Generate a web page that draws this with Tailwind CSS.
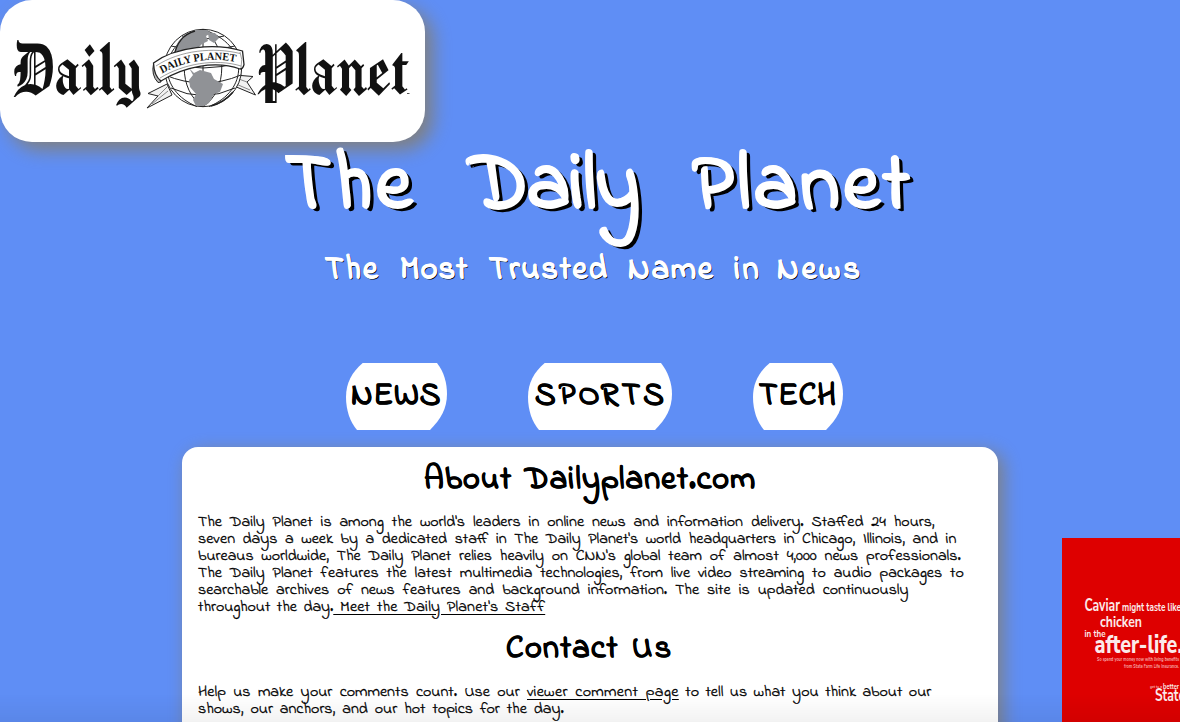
<!DOCTYPE html>
<html lang="en">
<head>
<meta charset="utf-8">
<title>The Daily Planet</title>
<script src="https://cdn.jsdelivr.net/npm/@tailwindcss/browser@4"></script>
</head>
<body class="h-[722px] overflow-hidden bg-[#5f8ef5] font-['Indie_Flower',cursive] text-black">
<header class="flex h-[142px]">
  <div class="h-[142px] w-[425px] rounded-[32px] bg-white shadow-[8px_8px_18px_#808080]">
    <svg viewBox="0 0 425 142" class="h-full w-full" fill="none" stroke="#222" stroke-width="1">
      <g fill="#111" stroke="none" font-family="'Manufacturing Consent','UnifrakturCook','Liberation Serif',serif" font-size="84">
        <text x="11" y="95" textLength="131" lengthAdjust="spacingAndGlyphs">Daily</text>
        <text x="255" y="95" textLength="154" lengthAdjust="spacingAndGlyphs">Planet</text>
      </g>
      <rect x="407" y="93" width="2.5" height="1" fill="#555" stroke="none"/>
      <!-- ribbon tails -->
      <path d="M167 84 148 93.500 158 96 147 108 172 95ZM235 75 253 76.500 247 82 255.500 95 234 86Z" fill="#f2f2f2"/>
      <path d="M168 86 158 96M236 78 247 82M236 84 250 90M168 91 152 104" stroke="#888"/>
      <!-- globe -->
      <circle cx="203" cy="68" r="38.700" fill="#fff"/>
      <path d="M203 29.500C178 45 178 91 203 106.500M203 29.500C228 45 228 91 203 106.500M203 29.500C155 45 158 91 197 106.500M203 29.500C251 45 248 91 209 106.500M203 29.500V106M165 75Q203 91 241 75M171 88Q203 103 235 88M165 62Q203 74 241 62M171 46Q203 54 235 46M182 36Q203 42 224 36"/>
      <g fill="#909296" stroke="none">
        <path d="M175 51C176 41 184 33 196 30L207 30 211 33 206 36 208 41 202 44 198 48 190 49 183 52Z"/>
        <path d="M208 33 215 33 219 38 214 43 209 40Z"/>
        <path d="M189 68 194 73 200 70 211 73 214 79 223 84 220 92 214 94 209 103 204 106 196 106 193 100 196 94 190 87 189 80 193 75Z"/>
      </g>
      <path d="M174 57C176 43 184 34 195 31M233 92C226 100 219 104 211 106" stroke-width="1.500"/>
      <!-- ribbon -->
      <path d="M153.500 64Q151 75 158 82.500L161 82Q156 73 158 63" fill="#bbb"/>
      <path d="M153.500 63C176 46 216 43 242.500 51L244 64.500Q243 69 240 69C215 60 183 67 161 81Q154 76 153.500 63Z" fill="#fff" stroke-width="1.300"/>
      <path d="M156 66C180 50 214 47 240 53.500M160 78C183 64 215 58 241 66M240 52Q243 59 241 68" stroke="#777" stroke-width=".7"/>
      <path id="band" d="M162 73.500C184 61 213 56 239 63" stroke="none"/>
      <text fill="#111" stroke="none" font-family="'Liberation Serif',serif" font-size="11" font-weight="700"><textPath href="#band" textLength="76" lengthAdjust="spacingAndGlyphs">DAILY PLANET</textPath></text>
    </svg>
  </div>
</header>
<main class="flex flex-col items-center">
  <h1 class="mt-px flex w-[610px] whitespace-nowrap text-[80px] font-bold leading-[90px] text-white [-webkit-text-stroke:1.3px_white] [text-shadow:4px_3px_black]">
    <span class="w-[184px] shrink-0 tracking-[3.5px]">The</span>
    <span class="w-[223px] shrink-0 tracking-[-0.8px]">Daily</span>
    <span class="tracking-[3.4px]">Planet</span>
  </h1>
  <h2 class="mt-[18px] flex w-[530px] whitespace-nowrap text-[32px] font-bold leading-[40px] text-white [-webkit-text-stroke:0.8px_white] [text-shadow:1px_1px_black]">
    <span class="w-[75px] shrink-0 tracking-[2.2px]">The</span>
    <span class="w-[89px] shrink-0 tracking-[1.3px]">Most</span>
    <span class="w-[139px] shrink-0 tracking-[2px]">Trusted</span>
    <span class="w-[106px] shrink-0 tracking-[2.1px]">Name</span>
    <span class="w-[43px] shrink-0 tracking-[3px]">in</span>
    <span class="tracking-[3.2px]">News</span>
  </h2>
  <nav class="mt-[72px] ml-[9px] flex gap-[81px] whitespace-nowrap text-[32px] font-bold leading-[67px] [-webkit-text-stroke:0.6px_black]">
    <a class="relative w-[101px] pl-[5px] tracking-[1px]"><svg class="absolute inset-0" width="101" height="67" fill="#fff"><path d="M16.700 0C6 9 0 20 0 34C0 47 4 59 11 67H84C95 56 101 45 101 31C101 20 98 9 91 0Z"/></svg><span class="relative">NEWS</span></a>
    <a class="relative w-[144px] pl-[7px] tracking-[3.2px]"><svg class="absolute inset-0" width="144" height="67" fill="#fff"><path d="M16.700 0C6 9 0 20 0 34C0 47 4 59 11 67H127C138 56 144 45 144 31C144 20 140 9 133 0Z"/></svg><span class="relative">SPORTS</span></a>
    <a class="relative w-[90px] pl-[6px] tracking-[1px]"><svg class="absolute inset-0" width="90" height="67" fill="#fff"><path d="M16.700 0C6 9 0 20 0 34C0 47 4 59 11 67H73C84 56 90 45 90 31C90 20 86 9 79 0Z"/></svg><span class="relative">TECH</span></a>
  </nav>
  <section class="mt-[17px] h-[300px] w-[816px] rounded-[16px] bg-white px-4 pt-[14px] whitespace-nowrap shadow-[5px_5px_18px_#808080]">
    <h2 class="ml-[226px] flex text-[32px] font-bold leading-[40px] [-webkit-text-stroke:0.6px_black]"><span class="w-[101px] tracking-[1.2px]">About</span><span class="tracking-[1.3px]">Dailyplanet.com</span></h2>
    <p class="mt-[13px] text-[16px] leading-[17px] [-webkit-text-stroke:0.35px_black]">
      <span class="[word-spacing:3.9px]">The Daily Planet is among the world's leaders in online news and information delivery. Staffed 24 hours,</span><br>
      <span class="[word-spacing:3.6px]">seven days a week by a dedicated staff in The Daily Planet's world headquarters in Chicago, Illinois, and in</span><br>
      <span class="[word-spacing:3.8px]">bureaus worldwide, The Daily Planet relies heavily on CNN's global team of almost 4,000 news professionals.</span><br>
      <span class="[word-spacing:3.9px]">The Daily Planet features the latest multimedia technologies, from live video streaming to audio packages to</span><br>
      <span class="[word-spacing:4px]">searchable archives of news features and background information. The site is updated continuously</span><br>
      <span class="[word-spacing:2.5px]">throughout the day.<a class="tracking-[0.2px] underline underline-offset-[3px]"> Meet the Daily Planet's Staff</a></span>
    </p>
    <h2 class="mt-[14px] ml-[308px] flex text-[32px] font-bold leading-[40px] [-webkit-text-stroke:0.6px_black]"><span class="w-[126px] tracking-[1.4px]">Contact</span><span class="tracking-[2.5px]">Us</span></h2>
    <p class="mt-[14px] text-[16px] leading-[17px] [-webkit-text-stroke:0.35px_black]">
      <span class="[word-spacing:3.4px]">Help us make your comments count. Use our <a class="tracking-[0.3px] underline underline-offset-[3px]">viewer comment page</a></span><span class="[word-spacing:2.5px]"> to tell us what you think about our</span><br>
      <span class="[word-spacing:3px]">shows, our anchors, and our hot topics for the day.</span>
    </p>
  </section>
</main>
<aside class="fixed right-0 bottom-0 h-[184px] w-[118px] bg-[#de0000]">
  <svg width="118" height="184" fill="#fbeaea" font-family="'Nunito Sans',Lato,sans-serif" font-weight="700">
    <text x="22.500" y="73" font-size="17" textLength="35.500" lengthAdjust="spacingAndGlyphs">Caviar</text>
    <text x="60" y="73" font-size="12" textLength="59" lengthAdjust="spacingAndGlyphs">might taste like</text>
    <text x="38" y="89" font-size="15" textLength="42" lengthAdjust="spacingAndGlyphs">chicken</text>
    <text x="22.500" y="99" font-size="10.500" textLength="21" lengthAdjust="spacingAndGlyphs">in the</text>
    <text x="32.500" y="115" font-size="25" font-weight="800" textLength="88" lengthAdjust="spacingAndGlyphs">after-life.</text>
    <g fill="#f6a9a9"><text x="35" y="123" font-size="5" textLength="82" lengthAdjust="spacingAndGlyphs">So spend your money now with living benefits</text>
    <text x="62" y="130" font-size="5" textLength="55" lengthAdjust="spacingAndGlyphs">from State Farm Life Insurance.</text>
    <text x="88" y="150" font-size="4.500" textLength="12" lengthAdjust="spacingAndGlyphs">get to a</text></g>
    <text x="101" y="151" font-size="8.500" textLength="16" lengthAdjust="spacingAndGlyphs">better</text>
    <text x="93" y="163" font-size="17" textLength="30" lengthAdjust="spacingAndGlyphs">State</text>
  </svg>
</aside>
<div class="fixed inset-x-0 bottom-0 h-[28px] bg-linear-to-b from-black/0 to-black/5"></div>
</body></html>
